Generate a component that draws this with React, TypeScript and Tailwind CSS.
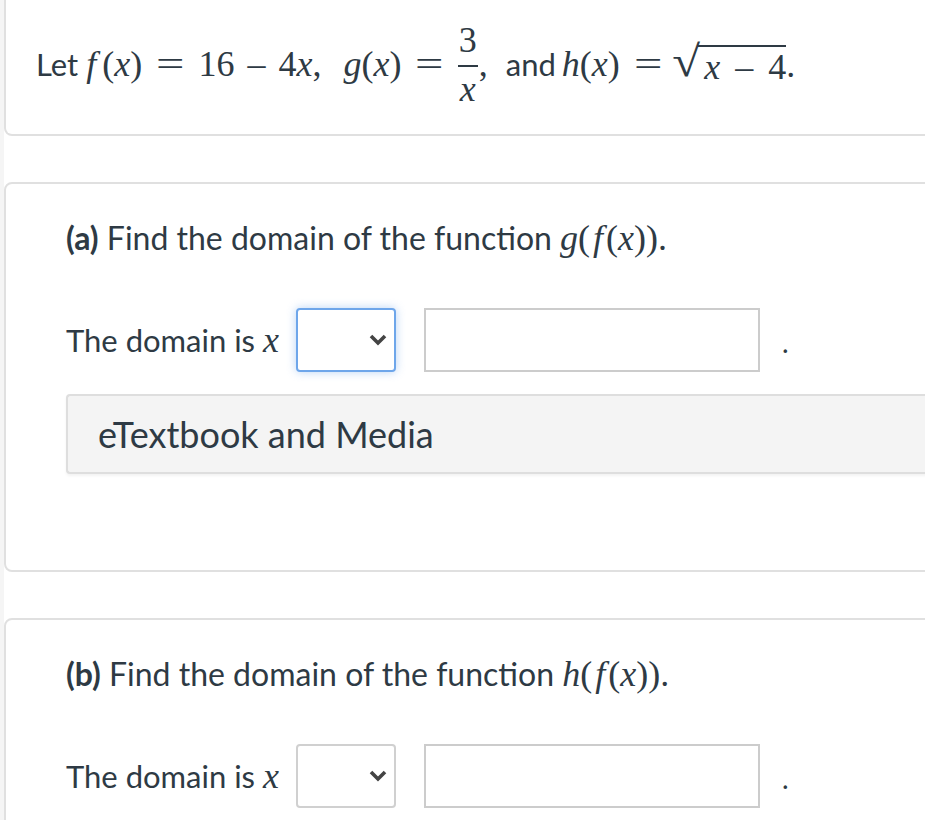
import React from 'react';

const serif = '"Liberation Serif", "DejaVu Serif", serif';

function M({ children }: { children: React.ReactNode }) {
  return (
    <span className="text-[36px]" style={{ fontFamily: serif }}>
      {children}
    </span>
  );
}

// MathJax-style wide equals sign
function Eq({ left = 18, right = 18 }: { left?: number; right?: number }) {
  return (
    <span className="inline-block scale-x-[1.4]" style={{ marginLeft: left, marginRight: right }}>
      =
    </span>
  );
}

function Chevron() {
  return (
    <svg width="20" height="14" viewBox="0 0 20 14" className="pointer-events-none absolute right-[8px] top-[25px]">
      <polyline points="3,3 10,10 17,3" fill="none" stroke="#444" strokeWidth="3.6" />
    </svg>
  );
}

function DomainRow({ focused }: { focused?: boolean }) {
  return (
    <div className="flex items-center">
      <span className="mr-[17px] text-[31px]">
        The domain is{' '}
        <M>
          <i>x</i>
        </M>
      </span>
      <div className="relative">
        <select
          className={
            'h-[64px] w-[100px] appearance-none rounded-[4px] bg-white outline-none ' +
            (focused
              ? 'border-2 border-[#6ea6ea] shadow-[0_0_10px_rgba(100,160,235,0.45)]'
              : 'border-2 border-[#d0d0d0]')
          }
        >
          <option></option>
        </select>
        <Chevron />
      </div>
      <input
        type="text"
        className="ml-[28px] h-[64px] w-[336px] border-2 border-[#cccccc] bg-white outline-none"
      />
      <span className="ml-[22px] mt-[4px] text-[28px]">.</span>
    </div>
  );
}

export default function App() {
  return (
    <div
      className="h-[820px] w-[925px] overflow-hidden bg-white text-[#2e3a44]"
      style={{ fontFamily: 'Lato, "Open Sans", sans-serif' }}
    >
      <div className="flex h-full w-[1000px] border-l-4 border-[#f5f5f5]">
        <div className="flex w-full flex-col">
          {/* intro card */}
          <div className="-mt-[20px] h-[156px] shrink-0 rounded-b-[8px] border-2 border-t-0 border-[#e0e0e0] pl-[30px] pt-[20px]">
            <div className="flex h-[128px] items-center text-[31px]">
              <span className="mr-[8px]">Let</span>
              <span className="text-[36px]" style={{ fontFamily: serif }}>
                <i className="mr-[6px]">f</i>(<i>x</i>)<Eq />16<span className="mx-[13px]">–</span>4<i>x</i>,
                <span className="ml-[22px]" />
                <i>g</i>(<i>x</i>)<Eq right={17} />
              </span>
              <span className="inline-flex flex-col items-center text-[36px] leading-none" style={{ fontFamily: serif }}>
                <span className="px-[2px] pb-[7px]">3</span>
                <span className="h-[2px] w-[20px] bg-[#2e3a44]" />
                <span className="pt-[4px] italic">x</span>
              </span>
              <span className="mr-[18px] text-[36px]" style={{ fontFamily: serif }}>,</span>
              <span className="mr-[6px]">and</span>
              <span className="text-[36px]" style={{ fontFamily: serif }}>
                <i>h</i>(<i>x</i>)<Eq right={16} />
              </span>
              <span className="flex items-start text-[36px]" style={{ fontFamily: serif }}>
                <span className="mt-[-2px] inline-block scale-x-[1.15] text-[44px] leading-none">√</span>
                <span className="mt-[3px] border-t-2 border-[#2e3a44] pl-[6px] leading-[40px]">
                  <i>x</i>
                  <span className="mx-[15px]">–</span>4
                </span>
                <span className="mt-[3px] leading-[40px]">.</span>
              </span>
            </div>
          </div>

          {/* part a */}
          <div className="mt-[46px] h-[390px] shrink-0 rounded-[8px] border-2 border-[#e0e0e0] pl-[60px] pt-[27px]">
            <div className="text-[32px]">
              <span className="font-bold">(a)</span> Find the domain of the function{' '}
              <M>
                <i>g</i>(<i className="mx-[3px]">f</i>(<i>x</i>))
              </M>
              <M>.</M>
            </div>
            <div className="mt-[43px]">
              <DomainRow focused />
            </div>
            <div className="mt-[22px] flex h-[80px] items-center rounded-l-[4px] border-2 border-r-0 border-[#dedede] bg-[#f4f4f4] pl-[30px] text-[36px] shadow-[0_2px_3px_rgba(0,0,0,0.05)]">
              eTextbook and Media
            </div>
          </div>

          {/* part b */}
          <div className="mt-[46px] h-[260px] shrink-0 rounded-[8px] border-2 border-[#e0e0e0] pl-[60px] pt-[27px]">
            <div className="text-[32px]">
              <span className="font-bold">(b)</span> Find the domain of the function{' '}
              <M>
                <i>h</i>(<i className="mx-[3px]">f</i>(<i>x</i>))
              </M>
              <M>.</M>
            </div>
            <div className="mt-[43px]">
              <DomainRow />
            </div>
          </div>
        </div>
      </div>
    </div>
  );
}
